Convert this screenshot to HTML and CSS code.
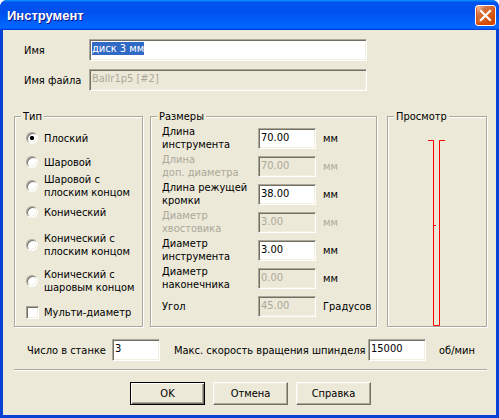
FILE: index.html
```html
<!DOCTYPE html>
<html lang="ru">
<head>
<meta charset="utf-8">
<title>Инструмент</title>
<link rel="stylesheet" href="styles.css">
</head>
<body>
<div class="window">
  <div class="titlebar">
    <span class="title">Инструмент</span>
    <span class="close">
      <svg width="13" height="13" viewBox="0 0 13 13"><path d="M2 2 L11 11 M11 2 L2 11" stroke="#fff" stroke-width="2.2" stroke-linecap="square"/></svg>
    </span>
  </div>
  <div class="client">
    <div class="row">
      <span class="lbl-top">Имя</span>
      <div class="edit edit-wide"><span class="sel">диск 3 мм</span></div>
    </div>
    <div class="row row-file">
      <span class="lbl-top">Имя файла</span>
      <div class="edit edit-wide disabled">Ballr1p5 [#2]</div>
    </div>

    <div class="groups">
      <div class="group group-type">
        <span class="legend">Тип</span>
        <div class="type-list">
          <div class="opt"><span class="radio checked"></span><span>Плоский</span></div>
          <div class="opt"><span class="radio"></span><span>Шаровой</span></div>
          <div class="opt"><span class="radio"></span><span>Шаровой с<br>плоским концом</span></div>
          <div class="opt"><span class="radio"></span><span>Конический</span></div>
          <div class="opt"><span class="radio"></span><span>Конический с<br>плоским концом</span></div>
          <div class="opt"><span class="radio"></span><span>Конический с<br>шаровым концом</span></div>
          <div class="opt opt-check"><span class="check"></span><span>Мульти-диаметр</span></div>
        </div>
      </div>

      <div class="group group-size">
        <span class="legend">Размеры</span>
        <div class="size-grid">
          <div class="size-row"><span class="slabel">Длина<br>инструмента</span><div class="edit edit-num">70.00</div><span class="unit">мм</span></div>
          <div class="size-row off"><span class="slabel">Длина<br>доп. диаметра</span><div class="edit edit-num disabled">70.00</div><span class="unit">мм</span></div>
          <div class="size-row"><span class="slabel">Длина режущей<br>кромки</span><div class="edit edit-num">38.00</div><span class="unit">мм</span></div>
          <div class="size-row off"><span class="slabel">Диаметр<br>хвостовика</span><div class="edit edit-num disabled">3.00</div><span class="unit">мм</span></div>
          <div class="size-row"><span class="slabel">Диаметр<br>инструмента</span><div class="edit edit-num">3.00</div><span class="unit">мм</span></div>
          <div class="size-row"><span class="slabel">Диаметр<br>наконечника</span><div class="edit edit-num disabled">0.00</div><span class="unit">мм</span></div>
          <div class="size-row"><span class="slabel">Угол</span><div class="edit edit-num disabled">45.00</div><span class="unit">Градусов</span></div>
        </div>
      </div>

      <div class="group group-preview">
        <span class="legend">Просмотр</span>
        <svg class="preview" width="98" height="209" viewBox="0 0 98 209">
          <path d="M40 23.5 H45.5 V208.5 H51.5 V23.5 H57" stroke="#ff0000" fill="none"/>
          <path d="M46 108.5 H48" stroke="#ff0000"/>
          <path d="M48 108.5 H50" stroke="#ffffff"/>
        </svg>
      </div>
    </div>

    <div class="row row-bottom">
      <span class="lbl-count">Число в станке</span>
      <div class="edit edit-count">3</div>
      <span class="lbl-speed">Макс. скорость вращения шпинделя</span>
      <div class="edit edit-speed">15000</div>
      <span class="unit-speed">об/мин</span>
    </div>

    <div class="sep"></div>

    <div class="buttons">
      <div class="btn btn-default">OK</div>
      <div class="btn">Отмена</div>
      <div class="btn">Справка</div>
    </div>
  </div>
</div>
</body>
</html>
```
FILE: styles.css
```css
html, body {
  margin: 0;
  padding: 0;
  background: #ffffff;
}
body {
  font-family: "DejaVu Sans Condensed", "DejaVu Sans", sans-serif;
  font-size: 11px;
  line-height: 13px;
  color: #000;
}
.window {
  width: 499px;
  height: 418px;
  background: #0842d4;
  border-radius: 7px 7px 0 0;
  display: flex;
  flex-direction: column;
  overflow: hidden;
}
.titlebar {
  height: 30px;
  flex: none;
  display: flex;
  align-items: center;
  justify-content: space-between;
  padding: 0 3px 0 7px;
  background: linear-gradient(180deg, #0997ff 0, #0053ee 8%, #0050ee 40%, #0066ff 88%, #0066ff 93%, #005bff 95%, #003dd7 96%, #003dd7 100%);
}
.title {
  color: #fff;
  font-family: "Liberation Sans", sans-serif;
  font-weight: bold;
  font-size: 13px;
  text-shadow: 1px 1px #0f1089;
}
.close {
  width: 21px;
  height: 21px;
  box-sizing: border-box;
  border: 1px solid #fff;
  border-radius: 3px;
  background: radial-gradient(circle at 90% 90%, #cc4600 0, #dc6527 55%, #cd7546 70%, #ffccb2 90%, #fff 100%);
  box-shadow: inset 0 -1px 2px 1px #da4600;
  display: flex;
  align-items: center;
  justify-content: center;
}
.close svg { display: block; }

.client {
  flex: 1;
  margin: 0 3px 3px;
  background: #ece9d8;
  padding-top: 9px;
}
.row {
  display: flex;
  align-items: center;
  height: 22px;
  margin-left: 21px;
}
.row-file { margin-top: 8px; }
.lbl-top { width: 65px; flex: none; }

.edit {
  box-sizing: border-box;
  height: 22px;
  border: 1px solid;
  border-color: #aca899 #fff #fff #aca899;
  box-shadow: inset 1px 1px #716f64, inset -1px -1px #f1efe2;
  background: #fff;
  padding: 2px 2px 0;
  line-height: 13px;
  white-space: nowrap;
  overflow: hidden;
  flex: none;
}
.edit.disabled {
  background: #ece9d8;
  color: #aca899;
}
.edit-wide { width: 278px; }
.sel {
  background: #316ac5;
  color: #fff;
}

.groups {
  display: flex;
  align-items: stretch;
  margin: 25px 0 0 11px;
}
.group {
  position: relative;
  box-sizing: border-box;
  border: 1px solid #aca899;
  box-shadow: inset 1px 1px #fff, 1px 1px #fff;
}
.legend {
  position: absolute;
  top: -7px;
  left: 6px;
  padding: 0 2px;
  background: #ece9d8;
  line-height: 13px;
}
.group-type {
  width: 129px;
  padding: 9px 0 0 11px;
}
.group-size {
  width: 227px;
  margin-left: 7px;
  padding: 7px 0 6px 11px;
}
.group-preview {
  width: 100px;
  margin-left: 10px;
}
.preview { display: block; }

.type-list {
  display: grid;
  grid-template-rows: 24px 24px 24px 28px 38px 34px 28px;
}
.opt {
  display: flex;
  align-items: center;
  gap: 6px;
  white-space: nowrap;
}
.opt-check { gap: 5px; }
.radio {
  width: 12px;
  height: 12px;
  box-sizing: border-box;
  flex: none;
  border-radius: 50%;
  border: 1px solid;
  border-color: #aca899 #fff #fff #aca899;
  box-shadow: inset 1px 1px #716f64, inset -1px -1px #f1efe2;
  background: #fff;
}
.radio.checked {
  background: radial-gradient(circle, #000 0, #000 1.8px, #fff 2.4px);
}
.check {
  width: 13px;
  height: 13px;
  box-sizing: border-box;
  flex: none;
  border: 1px solid;
  border-color: #aca899 #fff #fff #aca899;
  box-shadow: inset 1px 1px #716f64, inset -1px -1px #f1efe2;
  background: #fff;
}

.size-grid {
  display: grid;
  grid-template-rows: repeat(7, 28px);
}
.size-row {
  display: flex;
  align-items: center;
  white-space: nowrap;
}
.size-row.off .slabel,
.size-row.off .unit { color: #aca899; }
.slabel { width: 96px; flex: none; }
.edit-num { width: 58px; height: 21px; }
.unit { margin-left: 7px; }

.row-bottom {
  margin: 12px 0 0 24px;
}
.lbl-count { width: 85px; flex: none; }
.edit-count { width: 48px; }
.lbl-speed { width: 194px; margin-left: 14px; flex: none; white-space: nowrap; }
.edit-speed { width: 58px; }
.unit-speed { margin-left: 13px; }

.sep {
  margin: 8px 0 0 11px;
  width: 473px;
  height: 0;
  border-top: 1px solid #aca899;
  border-bottom: 1px solid #fff;
}

.buttons {
  display: flex;
  gap: 8px;
  margin: 11px 0 0 127px;
}
.btn {
  width: 75px;
  height: 23px;
  box-sizing: border-box;
  background: #ece9d8;
  border: 1px solid;
  border-color: #fff #716f64 #716f64 #fff;
  box-shadow: inset -1px -1px #aca899, inset 1px 1px #f1efe2;
  display: flex;
  align-items: center;
  justify-content: center;
}
.btn-default {
  border-color: #000;
  box-shadow: inset 1px 1px #fff, inset -1px -1px #716f64, inset -2px -2px #aca899;
}
```
